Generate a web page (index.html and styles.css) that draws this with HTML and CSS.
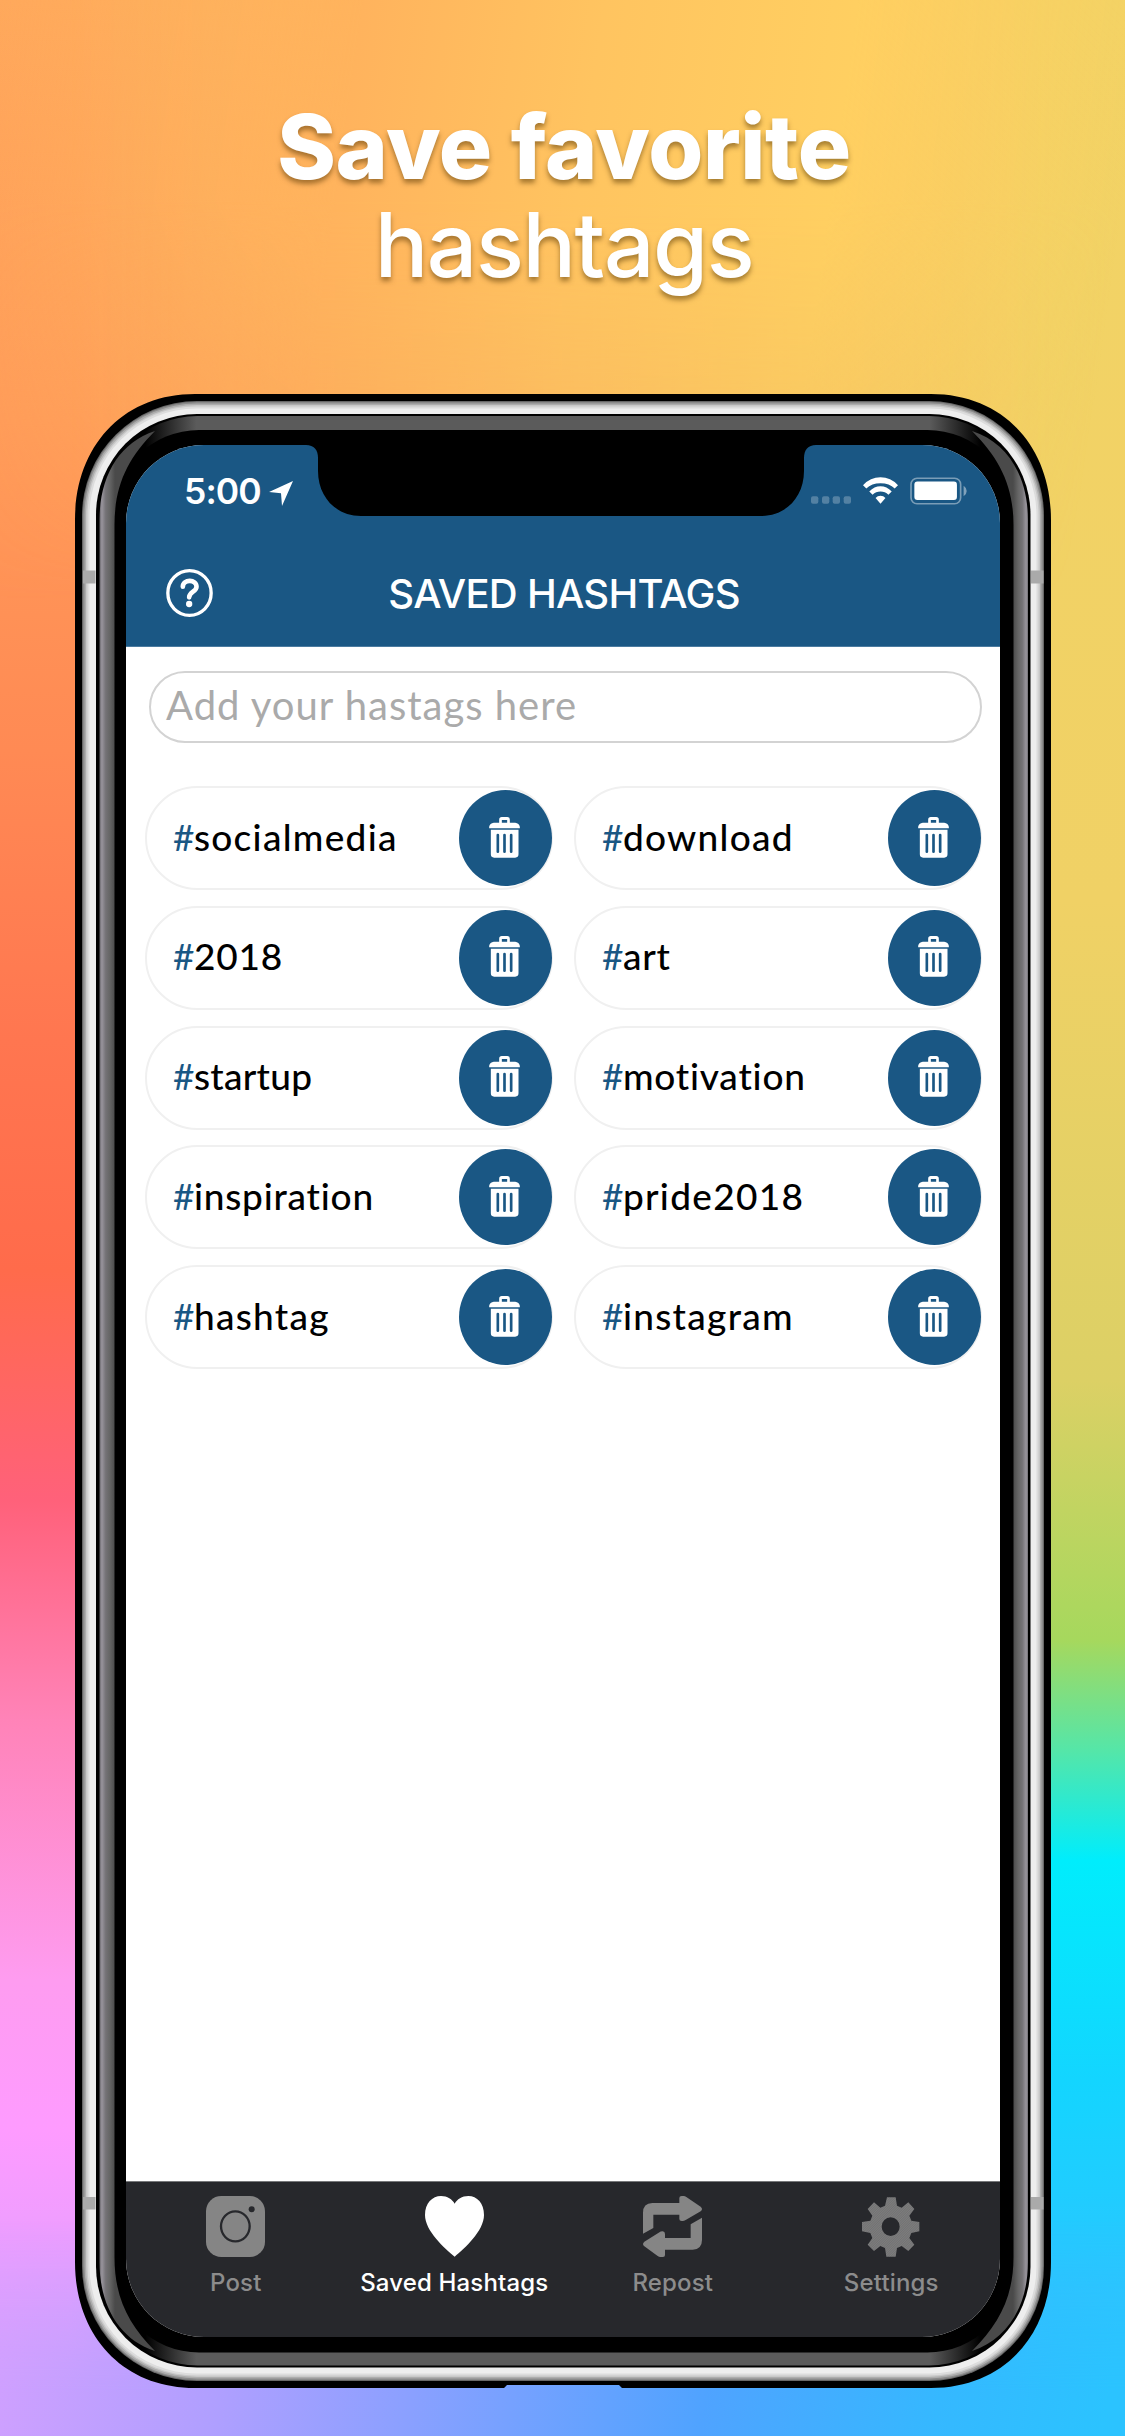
FILE: index.html
```html
<!DOCTYPE html>
<html lang="en">
<head>
<meta charset="utf-8">
<title>Save favorite hashtags</title>
<link rel="stylesheet" href="styles.css">
</head>
<body>
<svg width="0" height="0" class="symbols" aria-hidden="true">
  <symbol id="trash" viewBox="0 0 92 123">
    <path fill-rule="evenodd" d="M0 34V29Q2 18 14 17H30V8Q30 0 38 0H54Q62 0 62 8V17H78Q90 18 92 29V34ZM38 17H54V9H38Z"/>
    <path fill-rule="evenodd" d="M5 38H88V112Q88 122 78 122H15Q5 122 5 112ZM22 54V104Q22 108 26 108T30 104V54Q30 50 26 50T22 54ZM42 54V104Q42 108 46 108T50 104V54Q50 50 46 50T42 54ZM62 54V104Q62 108 66 108T70 104V54Q70 50 66 50T62 54Z"/>
  </symbol>
</svg>
<main class="poster">
  <h1 class="headline"><strong class="headline-bold">Save favorite</strong><span class="headline-light">hashtags</span></h1>

  <div class="phone">
    <svg class="frame" viewBox="75 394 976 1994" aria-hidden="true">
      <defs>
        <linearGradient id="rim" gradientUnits="userSpaceOnUse" x1="99" y1="0" x2="1027" y2="0">
          <stop offset="0.05" stop-color="#000"/><stop offset="0.105" stop-color="#5b5b5b"/>
          <stop offset="0.895" stop-color="#5b5b5b"/><stop offset="0.95" stop-color="#000"/>
        </linearGradient>
        <linearGradient id="steelL" gradientUnits="userSpaceOnUse" x1="99.500" y1="0" x2="115" y2="0">
          <stop offset="0" stop-color="#666469"/><stop offset="0.15" stop-color="#99959d"/><stop offset="0.4" stop-color="#747276"/><stop offset="0.65" stop-color="#666"/><stop offset="1" stop-color="#4a4a4a"/>
        </linearGradient>
        <linearGradient id="steelR" gradientUnits="userSpaceOnUse" x1="1028.500" y1="0" x2="1013" y2="0">
          <stop offset="0" stop-color="#666469"/><stop offset="0.15" stop-color="#99959d"/><stop offset="0.4" stop-color="#747276"/><stop offset="0.65" stop-color="#666"/><stop offset="1" stop-color="#4a4a4a"/>
        </linearGradient>
      </defs>
      <path d="M195 394H931C1003 394 1051 446 1051 520V2262C1051 2336 1003 2388 931 2388H622L619 2385H507L504 2388H195C123 2388 75 2336 75 2262V520C75 446 123 394 195 394Z"/>
      <rect x="82" y="401" width="962" height="1980" rx="115" fill="#686868"/>
      <rect x="83" y="402" width="960" height="1978" rx="114" fill="#8b8b8b"/>
      <rect x="84.500" y="403.500" width="957" height="1975" rx="112" fill="#adadad"/>
      <rect x="86" y="405" width="954" height="1972" rx="111" fill="#c8c8c8"/>
      <rect x="87.500" y="406.500" width="951" height="1969" rx="109" fill="#dcdcdc"/>
      <rect x="89.500" y="408.500" width="947" height="1965" rx="107" fill="#eee"/>
      <path fill="#aaa" d="M83 570.500H95.500V583.500H83ZM1031 570.500H1043.500V583.500H1031ZM83 2197H95.500V2209.500H83ZM1031 2197H1043.500V2209.500H1031Z"/>
      <rect x="96" y="414" width="934.500" height="1953.500" rx="101"/>
      <rect x="99.500" y="416" width="927.500" height="1949.500" rx="98" fill="url(#rim)"/>
      <rect x="113" y="430" width="900.500" height="1922.500" rx="86"/>
      <path fill="url(#steelL)" d="M99.500 520C99.500 478 118 443 155 431C128 458 114.500 485 114.500 525V2257C114.500 2297 128 2324 155 2351C118 2339 99.500 2304 99.500 2262Z"/>
      <path fill="url(#steelR)" d="M1028 520C1028 478 1009 443 972 431C999 458 1013.500 485 1013.500 525V2257C1013.500 2297 999 2324 972 2351C1009 2339 1028 2304 1028 2262Z"/>
    </svg>

    <div class="screen">
      <svg class="notch" viewBox="0 0 510 71" aria-hidden="true"><path d="M0 0H510C502 0 498 5 498 13V26C498 52 480 71 455 71H55C30 71 12 52 12 26V13C12 5 8 0 0 0Z"/></svg>
      <header class="app-header">
        <div class="status">
          <div class="clock"><span>5:00</span>
            <svg class="arrow" viewBox="0 0 72 75"><path fill="#fff" d="M72 0L39 75L36 37L0 33Z"/></svg>
          </div>
          <div class="signals">
            <svg class="dots" viewBox="0 0 120 22"><g fill="#fff" opacity=".25"><rect width="22" height="22" rx="6"/><rect x="33" width="22" height="22" rx="6"/><rect x="65" width="22" height="22" rx="6"/><rect x="98" width="22" height="22" rx="6"/></g></svg>
            <svg class="wifi" viewBox="0 0 106 80"><path fill="#fff" d="M0 24Q22 0 53 0T106 24L96 34Q80 18 53 18T10 34ZM19 43Q34 27 53 27T87 43L77 53Q67 43 53 43T29 53ZM38 63Q44 56 53 56T68 63L53 80Z"/></svg>
            <svg class="battery" viewBox="0 0 170 82"><rect x="3" y="3" width="148" height="76" rx="18" fill="none" stroke="#fff" stroke-opacity=".42" stroke-width="5"/><rect x="13" y="13" width="127" height="55" rx="9" fill="#fff"/><path fill="#fff" fill-opacity=".45" d="M160 25Q169 31 169 41T160 57Z"/></svg>
          </div>
        </div>
        <div class="titlebar">
          <svg class="help" viewBox="0 0 140 144"><ellipse cx="70" cy="72" rx="65" ry="67" fill="none" stroke="#fff" stroke-width="10"/><path d="M50 53C50 31 91 29 91 53C91 68 69 68 69 85" fill="none" stroke="#fff" stroke-width="14" stroke-linecap="round"/><circle cx="69" cy="105" r="9.500" fill="#fff"/></svg>
          <h2 class="title">SAVED HASHTAGS</h2>
        </div>
      </header>

      <section class="content">
        <div class="field"><span class="placeholder">Add your hastags here</span></div>
        <ul class="tags">
          <li class="tag"><span class="tag-name wide"><b class="hash">#</b>socialmedia</span><span class="delete"><svg class="bin"><use href="#trash"/></svg></span></li>
          <li class="tag"><span class="tag-name wide"><b class="hash">#</b>download</span><span class="delete"><svg class="bin"><use href="#trash"/></svg></span></li>
          <li class="tag"><span class="tag-name"><b class="hash">#</b>2018</span><span class="delete"><svg class="bin"><use href="#trash"/></svg></span></li>
          <li class="tag"><span class="tag-name"><b class="hash">#</b>art</span><span class="delete"><svg class="bin"><use href="#trash"/></svg></span></li>
          <li class="tag"><span class="tag-name tight"><b class="hash">#</b>startup</span><span class="delete"><svg class="bin"><use href="#trash"/></svg></span></li>
          <li class="tag"><span class="tag-name"><b class="hash">#</b>motivation</span><span class="delete"><svg class="bin"><use href="#trash"/></svg></span></li>
          <li class="tag"><span class="tag-name"><b class="hash">#</b>inspiration</span><span class="delete"><svg class="bin"><use href="#trash"/></svg></span></li>
          <li class="tag"><span class="tag-name wide"><b class="hash">#</b>pride2018</span><span class="delete"><svg class="bin"><use href="#trash"/></svg></span></li>
          <li class="tag"><span class="tag-name wide"><b class="hash">#</b>hashtag</span><span class="delete"><svg class="bin"><use href="#trash"/></svg></span></li>
          <li class="tag"><span class="tag-name wide"><b class="hash">#</b>instagram</span><span class="delete"><svg class="bin"><use href="#trash"/></svg></span></li>
        </ul>
      </section>

      <nav class="tabs">
        <div class="tab"><svg class="tab-icon" viewBox="0 0 177 183"><rect width="177" height="183" rx="46" fill="#858585"/><ellipse cx="88" cy="91" rx="43" ry="45" fill="none" stroke="#27282c" stroke-width="7"/><circle cx="137" cy="40" r="9" fill="#27282c"/></svg><span>Post</span></div>
        <div class="tab active"><svg class="tab-icon" viewBox="0 0 177 183"><path fill="#fff" d="M89 182C60 158 0 105 0 57C0 22 22 0 48 0C67 0 82 10 89 23C96 10 111 0 130 0C156 0 177 22 177 57C177 105 118 158 89 182Z"/></svg><span>Saved Hashtags</span></div>
        <div class="tab"><svg class="tab-icon" viewBox="0 0 177 183"><g fill="#858585"><path d="M0 113V50Q0 22 28 21H109V6Q109 0 116 0H122Q126 0 130 3L173 32Q181 39 173 46L128 72Q122 76 116 75Q109 75 109 69V56H31V96Z"/><path d="M177 65V132Q177 160 149 161H66V177Q66 183 60 183H52Q48 183 44 180L4 151Q-4 144 4 137L47 110Q53 106 59 106Q66 107 66 114V126H143V85Z"/></g></svg><span>Repost</span></div>
        <div class="tab"><svg class="tab-icon" viewBox="0 -4 177 183"><defs><pattern id="hatch" width="5" height="5" patternUnits="userSpaceOnUse" patternTransform="rotate(45)"><rect width="5" height="5" fill="#7d7d7d"/><rect width="1.500" height="5" fill="#6b6b6d"/></pattern></defs><path fill="url(#hatch)" fill-rule="evenodd" d="M75 0H101L105 25L119 31L139 15L157 35L142 55L148 70L172 74V102L148 107L142 122L157 142L139 161L119 146L105 152L101 178H73L69 152L55 146L36 161L17 142L31 122L25 107L0 102V74L25 70L31 55L17 35L36 15L55 31L69 25ZM86 60A27 28 0 1 0 86 116A27 28 0 1 0 86 60Z"/></svg><span>Settings</span></div>
      </nav>
    </div>
  </div>
</main>
</body>
</html>
```
FILE: styles.css
```css
* { box-sizing: border-box; }
body { margin: 0; font-family: Inter, "Liberation Sans", sans-serif; }
.symbols { position: absolute; }

.poster {
  position: relative;
  z-index: 0;
  width: 1125px;
  height: 2436px;
  overflow: hidden;
  background: linear-gradient(180deg, #ffa95c 0, #ff9b59 420px, #ff8a54 750px, #ff7650 1040px, #ff6b4b 1270px, #ff617a 1500px, #ff83b8 1720px, #fe9cf0 1980px, #fe9bff 2130px, #dca0ff 2350px, #cc9fff 2436px);
}
.poster::before {
  content: "";
  position: absolute;
  z-index: -1;
  inset: 0;
  background: linear-gradient(180deg, #f3d365 0, #f0d165 900px, #dcd065 1380px, #a6d85d 1640px, #55e6a8 1750px, #00edfc 1860px, #13d5ff 2080px, #2cc5ff 2300px, #2bc2ff 2436px);
  -webkit-mask-image: linear-gradient(90deg, transparent 70px, #000 1055px);
  mask-image: linear-gradient(90deg, transparent 70px, #000 1055px);
}
.poster::after {
  content: "";
  position: absolute;
  z-index: -1;
  inset: 0;
  background:
    linear-gradient(100deg, #d3a0ff 0, #af9fff 250px, #8aa0ff 440px, #4fa3ff 730px, #35b8ff 960px, #2bc3ff 1125px) 0 100% / 100% 236px no-repeat,
    linear-gradient(98deg, rgba(255,168,91,0) 0, #ffb35d 360px, #ffc460 600px, #ffcf61 850px, rgba(244,211,101,0) 1140px) 0 0 / 100% 620px no-repeat;
  -webkit-mask-image: linear-gradient(180deg, #000 0, #000 200px, transparent 600px, transparent 2220px, #000 2390px);
  mask-image: linear-gradient(180deg, #000 0, #000 200px, transparent 600px, transparent 2220px, #000 2390px);
}

.headline {
  display: flex;
  flex-direction: column;
  align-items: center;
  height: 394px;
  margin: 0;
  padding: 98px 0 0 3px;
  color: #fff;
  font-size: 89px;
  line-height: 98px;
  text-shadow: 0 4px 5px rgba(80, 50, 0, .5);
}
.headline-bold { font-weight: 800; letter-spacing: -.4px; }
.headline-light { font-weight: 450; letter-spacing: -1.4px; }

.phone {
  position: relative;
  width: 976px;
  height: 1994px;
  margin-left: 75px;
  padding: 51px;
}
.frame { position: absolute; inset: 0; width: 100%; height: 100%; }
.screen {
  position: relative;
  display: flex;
  flex-direction: column;
  width: 874px;
  height: 1892px;
  overflow: hidden;
  border-radius: 78px;
  background: #fff;
}
.notch { position: absolute; top: 0; left: 180px; width: 510px; height: 71px; }

.app-header {
  height: 202px;
  background: #1a5784;
  border-bottom: 1px solid #4b7ba0;
  color: #fff;
}
.status {
  display: flex;
  justify-content: space-between;
  height: 94px;
  padding: 24px 33px 0 58px;
}
.clock { display: flex; gap: 8px; font-size: 35.500px; font-weight: 600; line-height: 45px; letter-spacing: -.9px; }
.arrow { width: 24px; height: 25px; margin-top: 12px; }
.signals { display: flex; align-items: flex-start; padding-top: 8px; }
.dots { width: 40px; height: 8px; margin: 19px 12px 0 0; }
.wifi { width: 35px; height: 27px; margin-right: 12px; }
.battery { width: 57px; height: 28px; }
.titlebar { display: flex; align-items: center; height: 108px; padding-left: 40px; }
.help { width: 47px; height: 48px; }
.title {
  width: 700px;
  margin: 2px 0 0 1px;
  text-align: center;
  font-size: 40px;
  font-weight: 500;
  line-height: 48px;
  letter-spacing: -.75px;
}

.content {
  flex: 1;
  padding: 24px 17px 0 19px;
  font-family: Lato, "Open Sans", sans-serif;
}
.field {
  display: flex;
  width: 833px;
  height: 72px;
  margin-left: 4px;
  padding-left: 15px;
  border: 2px solid #d3d3d3;
  border-radius: 36px;
}
.placeholder { color: #aaa; font-size: 40px; line-height: 65px; letter-spacing: 1px; }
.tags {
  display: grid;
  grid-template-columns: 408px 408px;
  grid-auto-rows: 104px;
  gap: 15.800px 21px;
  margin: 43px 0 0;
  padding: 0;
  list-style: none;
}
.tag {
  display: flex;
  align-items: center;
  justify-content: space-between;
  padding-left: 26px;
  border: 2px solid #f0f0f0;
  border-radius: 52px;
}
.tag-name {
  margin-top: -3px;
  color: #000;
  font-size: 37px;
  font-weight: 500;
  line-height: 44px;
  letter-spacing: .8px;
}
.wide { letter-spacing: 1.300px; }
.tight { letter-spacing: .3px; }
.hash { color: #1a5784; font-weight: 400; letter-spacing: -.6px; }
.delete {
  display: grid;
  place-items: center;
  width: 93px;
  height: 96px;
  margin-right: -1px;
  border-radius: 50%;
  background: #1a5784;
}
.bin { width: 31px; height: 41px; margin: -2px 2px 0 0; fill: #fff; }

.tabs {
  display: grid;
  grid-template-columns: repeat(4, 1fr);
  height: 156px;
  padding-top: 14px;
  border-top: 1px solid #77787a;
  background: #27282c;
}
.tab {
  display: flex;
  flex-direction: column;
  align-items: center;
  gap: 11px;
  padding-left: 1px;
  color: #8c8c8c;
  font-size: 24px;
  font-weight: 450;
  line-height: 30px;
  letter-spacing: .15px;
}
.tab-icon { width: 59px; height: 61px; }
.active { color: #fff; }
```
